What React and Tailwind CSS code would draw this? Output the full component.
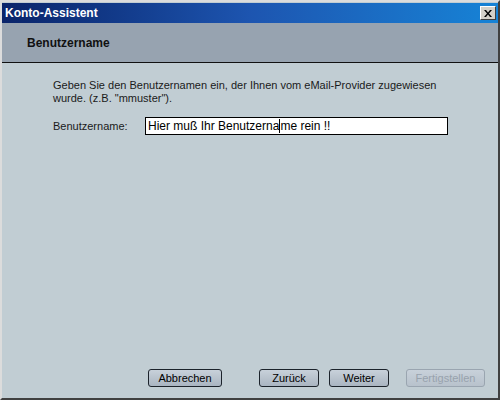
import React from 'react';

const font = { fontFamily: '"Liberation Sans", Arial, sans-serif' };

const WizButton = ({ children, disabled, className = '' }) => (
  <button
    type="button"
    disabled={disabled}
    className={`h-[18px] rounded-[3px] border text-[11px] leading-none font-normal bg-gradient-to-b from-[#c8d1da] to-[#aab5c1] ${
      disabled ? 'border-[#9aa5b0] text-[#98a2ad] from-[#c4cdd5] to-[#b8c2cc]' : 'border-[#1c232b] text-black'
    } ${className}`}
  >
    {children}
  </button>
);

export default function App() {
  return (
    <div
      className="w-[500px] h-[400px] flex flex-col bg-[#c1cdd3] border-l-2 border-t-2 border-[#dcdcdc] border-r-2 border-r-[#404040] border-b-2 border-b-[#404040] overflow-hidden"
      style={font}
    >
      {/* title bar */}
      <div className="h-[20px] mt-[1px] flex items-center justify-between bg-gradient-to-r from-[#0a246a] via-[#1d55b0] to-[#1683d6] pl-[3px] pr-[2px]">
        <span className="text-white font-bold text-[12px]">Konto-Assistent</span>
        <div className="w-[16px] h-[14px] bg-[#d4d0c8] border border-t-white border-l-white border-r-[#404040] border-b-[#404040] flex items-center justify-center">
          <svg width="8" height="7" viewBox="0 0 8 7">
            <path d="M0 0h2l2 2.5L6 0h2L5 3.5 8 7H6L4 4.5 2 7H0l3-3.5z" fill="black" />
          </svg>
        </div>
      </div>

      {/* header */}
      <div className="h-[40px] bg-[#97a3b0] flex items-center pl-[25px] border-b border-[#111]">
        <span className="font-bold text-[12px] text-[#111]">Benutzername</span>
      </div>

      {/* body */}
      <div className="flex-1 flex flex-col pl-[51px] pt-[16px] text-[11px] text-[#1a1a1a] leading-[13px]">
        <p className="w-[400px]">
          Geben Sie den Benutzernamen ein, der Ihnen vom eMail-Provider zugewiesen wurde. (z.B. "mmuster").
        </p>
        <div className="flex items-center mt-[12px]">
          <span className="w-[92px]">Benutzername:</span>
          <div className="w-[303px] h-[18px] bg-white border border-black flex items-center pl-[2px] text-[12px] text-black">
            <span>Hier muß Ihr Benutzerna</span>
            <span className="w-[1px] h-[14px] bg-black" />
            <span>me rein !!</span>
          </div>
        </div>

        <div className="mt-auto mb-[11px] flex items-center">
          <WizButton className="ml-[95px] w-[74px]">Abbrechen</WizButton>
          <WizButton className="ml-[37px] w-[60px]">Zurück</WizButton>
          <WizButton className="ml-[10px] w-[60px]">Weiter</WizButton>
          <WizButton disabled className="ml-[17px] w-[79px]">Fertigstellen</WizButton>
        </div>
      </div>
    </div>
  );
}
